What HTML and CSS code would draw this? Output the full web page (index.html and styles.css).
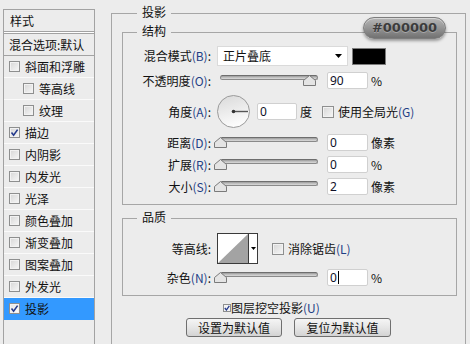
FILE: index.html
```html
<!DOCTYPE html>
<html lang="zh-CN">
<head>
<meta charset="utf-8">
<title>图层样式</title>
<link rel="stylesheet" href="styles.css">
</head>
<body>
<div class="dialog">
  <div class="styles-list">
    <div class="list-head">样式</div>
    <div class="list-blend">混合选项:默认</div>
    <div class="list-item"><span class="cb"></span>斜面和浮雕</div>
    <div class="list-item sub"><span class="cb"></span>等高线</div>
    <div class="list-item sub"><span class="cb"></span>纹理</div>
    <div class="list-item"><span class="cb"><svg width="9" height="9" viewBox="0 0 9 9"><path d="M1.5 4.5 L3.6 7.2 L7.6 1.6" fill="none" stroke="#23398c" stroke-width="1.6"/></svg></span>描边</div>
    <div class="list-item"><span class="cb"></span>内阴影</div>
    <div class="list-item"><span class="cb"></span>内发光</div>
    <div class="list-item"><span class="cb"></span>光泽</div>
    <div class="list-item"><span class="cb"></span>颜色叠加</div>
    <div class="list-item"><span class="cb"></span>渐变叠加</div>
    <div class="list-item"><span class="cb"></span>图案叠加</div>
    <div class="list-item"><span class="cb"></span>外发光</div>
    <div class="list-item sel"><span class="cb light"><svg width="9" height="9" viewBox="0 0 9 9"><path d="M1.5 4.5 L3.6 7.2 L7.6 1.6" fill="none" stroke="#23398c" stroke-width="1.6"/></svg></span>投影</div>
  </div>

  <div class="group outer">
    <div class="legend lg-outer">投影</div>
    <div class="badge">#000000</div>

    <div class="group inner">
      <div class="legend lg-inner">结构</div>

      <div class="row r-blend">
        <span class="lbl">混合模式<span class="k">(B)</span>:</span>
        <div class="select"><span>正片叠底</span><svg width="7" height="4" viewBox="0 0 7 4"><path d="M0 0H7L3.5 4Z" fill="#000"/></svg></div>
        <span class="swatch"></span>
      </div>

      <div class="row r-gap6">
        <span class="lbl">不透明度<span class="k">(O)</span>:</span>
        <div class="slider"><div class="track"></div><span class="thumb" style="left:86px"><svg width="13" height="11" viewBox="0 0 13 11"><path d="M6.5 0.5 L12.5 5.5 V10.5 H0.5 V5.5 Z" fill="#e4e4e4" stroke="#7a7a7a"/></svg></span></div>
        <span class="inp">90</span>
        <span class="unit">%</span>
      </div>

      <div class="row r-angle">
        <span class="lbl">角度<span class="k">(A)</span>:</span>
        <svg class="dial" width="33" height="33" viewBox="0 0 33 33">
          <defs><linearGradient id="dg" x1="0" y1="0" x2="0.3" y2="1"><stop offset="0" stop-color="#d9d9d9"/><stop offset="1" stop-color="#fbfbfb"/></linearGradient></defs>
          <circle cx="16.5" cy="16.5" r="16" fill="url(#dg)" stroke="#9a9a9a"/>
          <line x1="16.5" y1="16.5" x2="31" y2="16.5" stroke="#555" stroke-width="1.4"/>
          <circle cx="16.5" cy="16.5" r="1.8" fill="#333"/>
        </svg>
        <span class="inp inp-angle">0</span>
        <span class="unit">度</span>
        <span class="cb big global"></span>
        <span>使用全局光<span class="k">(G)</span></span>
      </div>

      <div class="row r-gap6">
        <span class="lbl">距离<span class="k">(D)</span>:</span>
        <div class="slider"><div class="track"></div><span class="thumb" style="left:-3px"><svg width="13" height="11" viewBox="0 0 13 11"><path d="M6.5 0.5 L12.5 5.5 V10.5 H0.5 V5.5 Z" fill="#e4e4e4" stroke="#7a7a7a"/></svg></span></div>
        <span class="inp">0</span>
        <span class="unit">像素</span>
      </div>

      <div class="row r-gap5">
        <span class="lbl">扩展<span class="k">(R)</span>:</span>
        <div class="slider"><div class="track"></div><span class="thumb" style="left:-3px"><svg width="13" height="11" viewBox="0 0 13 11"><path d="M6.5 0.5 L12.5 5.5 V10.5 H0.5 V5.5 Z" fill="#e4e4e4" stroke="#7a7a7a"/></svg></span></div>
        <span class="inp">0</span>
        <span class="unit">%</span>
      </div>

      <div class="row r-gap5">
        <span class="lbl">大小<span class="k">(S)</span>:</span>
        <div class="slider"><div class="track"></div><span class="thumb" style="left:-3px"><svg width="13" height="11" viewBox="0 0 13 11"><path d="M6.5 0.5 L12.5 5.5 V10.5 H0.5 V5.5 Z" fill="#e4e4e4" stroke="#7a7a7a"/></svg></span></div>
        <span class="inp">2</span>
        <span class="unit">像素</span>
      </div>
    </div>

    <div class="group inner quality">
      <div class="legend lg-inner">品质</div>

      <div class="row r-contour">
        <span class="lbl">等高线:</span>
        <div class="contour">
          <svg width="30" height="29" viewBox="0 0 30 29"><rect width="30" height="29" fill="#fff"/><path d="M0 29 L30 0 V29 Z" fill="#a3a3a3"/></svg>
          <span class="cdrop"><svg width="5" height="3" viewBox="0 0 5 3"><path d="M0 0H5L2.5 3Z" fill="#000"/></svg></span>
        </div>
        <span class="cb big anti"></span>
        <span>消除锯齿<span class="k">(L)</span></span>
      </div>

      <div class="row r-gap5">
        <span class="lbl">杂色<span class="k">(N)</span>:</span>
        <div class="slider"><div class="track"></div><span class="thumb" style="left:-3px"><svg width="13" height="11" viewBox="0 0 13 11"><path d="M6.5 0.5 L12.5 5.5 V10.5 H0.5 V5.5 Z" fill="#e4e4e4" stroke="#7a7a7a"/></svg></span></div>
        <span class="inp">0<span class="caret"></span></span>
        <span class="unit">%</span>
      </div>
    </div>

    <div class="knock">
      <span class="cb small"><svg width="6" height="6" viewBox="0 0 6 6"><path d="M0.8 3 L2.4 5 L5.3 0.8" fill="none" stroke="#23398c" stroke-width="1.3"/></svg></span>
      <span>图层挖空投影<span class="k">(U)</span></span>
    </div>

    <div class="buttons">
      <button class="btn btn-set">设置为默认值</button>
      <button class="btn btn-reset">复位为默认值</button>
    </div>
  </div>
</div>
</body>
</html>
```

FILE: styles.css
```css
html, body {
  margin: 0;
  height: 344px;
  overflow: hidden;
  background: #ececec;
}
body {
  font-family: "Noto Sans CJK SC", "Noto Sans", sans-serif;
  font-size: 12px;
  line-height: 14px;
  color: #111;
}
.dialog {
  display: flex;
  align-items: flex-start;
}

/* left styles list */
.styles-list {
  margin: 9px 0 0 3px;
  width: 90px;
  height: 345px;
  border: 1px solid #a2a2a2;
  flex: none;
}
.list-head {
  height: 21px;
  line-height: 21px;
  padding-left: 6px;
  border-bottom: 1px solid #a2a2a2;
  box-shadow: 0 1px 0 #fff;
}
.list-blend {
  margin-top: 1px;
  height: 21px;
  line-height: 21px;
  padding-left: 5px;
  border-top: 1px solid #a2a2a2;
  border-bottom: 1px solid #a2a2a2;
}
.list-item {
  height: 21px;
  display: flex;
  align-items: center;
  padding-left: 5px;
  border-bottom: 1px solid #fafafa;
}
.list-item.sub {
  padding-left: 19px;
}
.list-item.sel {
  background: #3399ff;
  border-bottom-color: #3399ff;
}
.cb {
  flex: none;
  box-sizing: border-box;
  width: 11px;
  height: 11px;
  margin-right: 5px;
  border: 1px solid #8e8f8f;
  background: linear-gradient(135deg, #d6d6d6, #f7f7f7);
  box-shadow: inset 0 0 0 1px #f2f2f2;
  display: flex;
  align-items: center;
  justify-content: center;
}
.cb svg { display: block; }
.cb.light {
  background: linear-gradient(135deg, #e4e4e4, #ffffff);
}
.cb.big {
  width: 12px;
  height: 12px;
  margin-right: 4px;
}
.cb.global { margin-left: 10px; }
.cb.anti { margin-left: 14px; }
.cb.small {
  width: 8px;
  height: 8px;
  margin-right: 0;
  box-shadow: none;
  background: #f4f4f4;
}

/* group boxes */
.group {
  border: 1px solid #a6a6a6;
}
.legend {
  width: fit-content;
  height: 14px;
  line-height: 14px;
  margin-top: -9px;
  padding: 0 5px;
  background: #ececec;
}
.outer {
  position: relative;
  margin: 13px 0 0 16px;
  width: 353px;
  padding: 0 8px 14px 10px;
  box-sizing: content-box;
  width: 335px;
}
.lg-outer { margin-left: 15px; }
.lg-inner { margin-left: 14px; }
.inner {
  margin-top: 13px;
  padding-bottom: 9px;
}
.quality { margin-top: 13px; }

.badge {
  position: absolute;
  z-index: 2;
  left: 251px;
  top: 3px;
  box-sizing: border-box;
  width: 83px;
  height: 22px;
  border-radius: 11px;
  border: 1px solid #7d7d7d;
  background: linear-gradient(#b7b7b7, #959595 50%, #717171);
  box-shadow: 0 2px 3px rgba(0, 0, 0, 0.35), inset 0 1px 0 rgba(255, 255, 255, 0.45);
  font-family: "DejaVu Sans", sans-serif;
  font-weight: bold;
  font-size: 13px;
  line-height: 20px;
  text-align: center;
  color: #3c3c3c;
  text-shadow: 0 1px 0 rgba(255, 255, 255, 0.3);
}

/* rows */
.row {
  display: flex;
  align-items: center;
  height: 17px;
}
.lbl {
  flex: none;
  width: 88px;
  margin-right: 6px;
  text-align: right;
  white-space: nowrap;
}
.k { color: #1f3f86; }
.r-blend { height: 20px; margin-top: 8px; }
.r-gap6 { margin-top: 6px; }
.r-gap5 { margin-top: 5px; }
.r-angle { height: 33px; margin-top: 6px; }
.r-contour { height: 31px; margin-top: 9px; }

.select {
  flex: none;
  box-sizing: border-box;
  width: 131px;
  height: 20px;
  border: 1px solid #dadada;
  background: #fff;
  display: flex;
  align-items: center;
  justify-content: space-between;
  padding: 0 5px 0 5px;
}
.select svg { display: block; }
.swatch {
  flex: none;
  box-sizing: border-box;
  width: 34px;
  height: 17px;
  margin-left: 4px;
  background: #000;
  border: 1px solid #7c7c7c;
}

.slider {
  flex: none;
  position: relative;
  width: 101px;
  height: 11px;
  margin-right: 9px;
}
.track {
  margin-left: 3px;
  height: 5px;
  box-sizing: border-box;
  border-radius: 3px;
  border: 1px solid #8a8a8a;
  border-top-color: #6e6e6e;
  background: linear-gradient(#9a9a9a, #c6c6c6 60%, #d9d9d9);
}
.thumb {
  position: absolute;
  top: 0;
  width: 13px;
  height: 11px;
}
.thumb svg { display: block; }

.inp {
  flex: none;
  box-sizing: border-box;
  width: 41px;
  height: 17px;
  border: 1px solid #d0d0d0;
  border-radius: 2px;
  background: #fff;
  padding-left: 2px;
  font-family: "Noto Sans", sans-serif;
  font-size: 12px;
  line-height: 15px;
  color: #101028;
  display: flex;
  align-items: center;
}
.inp-angle { width: 40px; }
.caret {
  display: inline-block;
  width: 1px;
  height: 13px;
  background: #000;
  margin-left: 1px;
}
.unit { margin-left: 3px; }

.dial {
  flex: none;
  display: block;
  margin-right: 7px;
}

.contour {
  flex: none;
  display: flex;
  border: 1px solid #3a3a3a;
  height: 29px;
  background: #fff;
}
.contour svg { display: block; }
.cdrop {
  width: 9px;
  border-left: 1px solid #3a3a3a;
  display: flex;
  justify-content: center;
  padding-top: 13px;
  box-sizing: border-box;
}

.knock {
  display: flex;
  align-items: center;
  height: 13px;
  margin-top: 5px;
  padding-left: 101px;
}
.buttons {
  display: flex;
  gap: 12px;
  margin-top: 4px;
  padding-left: 64px;
}
.btn {
  box-sizing: border-box;
  height: 19px;
  padding: 0;
  border: 1px solid #6f6f6f;
  border-radius: 3px;
  background: linear-gradient(#f5f5f5, #e6e6e6 50%, #d3d3d3);
  font-family: inherit;
  font-size: 12px;
  line-height: 17px;
  color: #111;
  text-align: center;
}
.btn-set { width: 96px; }
.btn-reset { width: 97px; }
```
